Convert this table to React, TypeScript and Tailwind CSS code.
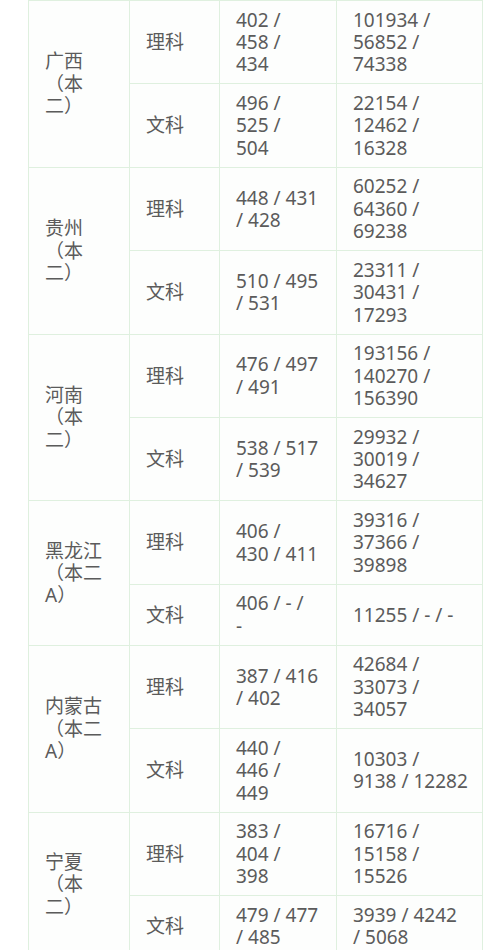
import React from "react";

type Row = { subject: string; score: string[]; rank: string[] };
type Region = { name: string; rows: Row[] };

// lines are split the way the source page wraps them
const regions: Region[] = [
  {
    name: "广西（本二）",
    rows: [
      { subject: "理科", score: ["402 /", "458 /", "434"], rank: ["101934 /", "56852 /", "74338"] },
      { subject: "文科", score: ["496 /", "525 /", "504"], rank: ["22154 /", "12462 /", "16328"] },
    ],
  },
  {
    name: "贵州（本二）",
    rows: [
      { subject: "理科", score: ["448 / 431", "/ 428"], rank: ["60252 /", "64360 /", "69238"] },
      { subject: "文科", score: ["510 / 495", "/ 531"], rank: ["23311 /", "30431 /", "17293"] },
    ],
  },
  {
    name: "河南（本二）",
    rows: [
      { subject: "理科", score: ["476 / 497", "/ 491"], rank: ["193156 /", "140270 /", "156390"] },
      { subject: "文科", score: ["538 / 517", "/ 539"], rank: ["29932 /", "30019 /", "34627"] },
    ],
  },
  {
    name: "黑龙江（本二A）",
    rows: [
      { subject: "理科", score: ["406 /", "430 / 411"], rank: ["39316 /", "37366 /", "39898"] },
      { subject: "文科", score: ["406 / - /", "-"], rank: ["11255 / - / -"] },
    ],
  },
  {
    name: "内蒙古（本二A）",
    rows: [
      { subject: "理科", score: ["387 / 416", "/ 402"], rank: ["42684 /", "33073 /", "34057"] },
      { subject: "文科", score: ["440 /", "446 /", "449"], rank: ["10303 /", "9138 / 12282"] },
    ],
  },
  {
    name: "宁夏（本二）",
    rows: [
      { subject: "理科", score: ["383 /", "404 /", "398"], rank: ["16716 /", "15158 /", "15526"] },
      { subject: "文科", score: ["479 / 477", "/ 485"], rank: ["3939 / 4242", "/ 5068"] },
    ],
  },
];

const cell = "border border-[#dff0df] px-4 py-[7.6px] align-middle";

function Lines({ lines }: { lines: string[] }) {
  return (
    <>
      {lines.map((l, i) => (
        <span key={i} className="block whitespace-nowrap">
          {l}
        </span>
      ))}
    </>
  );
}

export default function App() {
  return (
    <div
      className="w-[500px] h-[950px] overflow-hidden bg-white pl-[28px] text-[19px] leading-[22.4px] text-[#5b5b5b] [text-spacing-trim:space-all]"
      style={{ fontFamily: '"Noto Sans", "Noto Sans CJK SC", sans-serif' }}
    >
      <table className="table-fixed border-collapse w-[454px] bg-[#fdfefd]">
        <colgroup>
          <col className="w-[101px]" />
          <col className="w-[90px]" />
          <col className="w-[117px]" />
          <col className="w-[146px]" />
        </colgroup>
        <tbody>
          {regions.map((r) =>
            r.rows.map((row, i) => (
              <tr key={r.name + row.subject}>
                {i === 0 && (
                  <td rowSpan={2} className={cell}>
                    {r.name}
                  </td>
                )}
                <td className={cell}>{row.subject}</td>
                <td className={cell}>
                  <Lines lines={row.score} />
                </td>
                <td className={cell}>
                  <Lines lines={row.rank} />
                </td>
              </tr>
            ))
          )}
        </tbody>
      </table>
    </div>
  );
}
